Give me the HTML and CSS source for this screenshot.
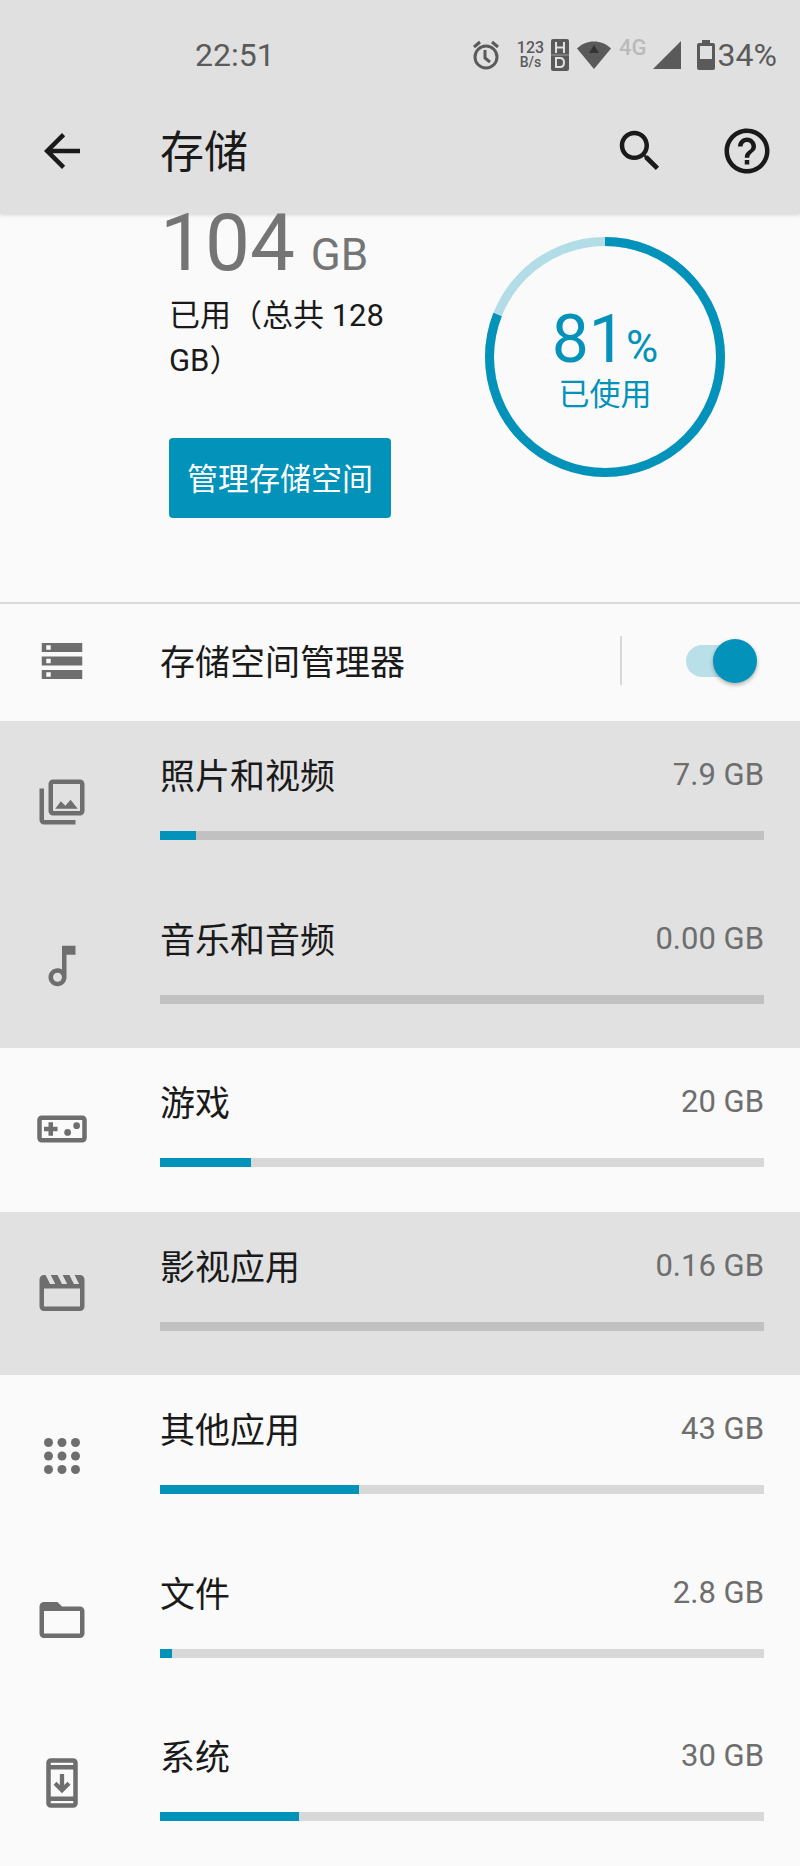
FILE: index.html
```html
<!DOCTYPE html>
<html lang="zh-CN">
<head>
  <meta charset="UTF-8">
  <meta name="viewport" content="width=device-width, initial-scale=1.0">
  <title>存储</title>
  <link rel="stylesheet" href="styles.css">
</head>
<body>
  <header class="header">
    <!-- Status bar -->
    <div class="status-bar">
      <span class="clock">22:51</span>
      <div class="status-icons">
        <svg class="status-alarm" viewBox="0 0 28 30" width="28" height="30">
          <g fill="none" stroke="currentColor" stroke-width="3">
            <circle cx="14" cy="17" r="11"/>
            <path d="M13 10v8l5 4M2 7l6-5M26 7l-6-5"/>
          </g>
        </svg>
        <div class="net-speed">
          <span class="net-value">123</span>
          <span class="net-unit">B/s</span>
        </div>
        <svg class="status-hd" viewBox="0 0 18 32" width="18" height="32">
          <rect width="18" height="32" rx="2" fill="currentColor"/>
          <path d="M5 3v11M13 3v11M5 8.500h8M5 19v9h4q4 0 4-4.500T9 19z" fill="none" stroke="#e0e0e0" stroke-width="2"/>
          <path d="M0 16h18" stroke="#e0e0e0" stroke-width="1" opacity="0.5"/>
        </svg>
        <svg class="status-wifi" viewBox="0 0 34 28" width="34" height="28">
          <path d="M17 28L0 7.500C9-2 25-2 34 7.500z" fill="currentColor"/>
          <path d="M17 4l5 8H12z" fill="#333"/>
        </svg>
        <span class="net-type">4G</span>
        <svg class="status-signal" viewBox="0 0 28 28" width="28" height="28">
          <path d="M28 0v28H0z" fill="currentColor"/>
        </svg>
        <svg class="status-battery" viewBox="0 0 18 30" width="18" height="30">
          <path d="M5 0h8v3h3q2 0 2 2v23q0 2-2 2H2q-2 0-2-2V5q0-2 2-2h3zM3 6v13h12V6z" fill="currentColor" fill-rule="evenodd"/>
        </svg>
        <span class="battery-level">34%</span>
      </div>
    </div>

    <!-- Toolbar -->
    <div class="toolbar">
      <button class="icon-btn" aria-label="返回">
        <svg class="icon" viewBox="0 0 24 24"><path d="M20 11H7.830l5.590-5.590L12 4l-8 8 8 8 1.410-1.410L7.830 13H20v-2z"/></svg>
      </button>
      <h1 class="title">存储</h1>
      <div class="actions">
        <button class="icon-btn" aria-label="搜索">
          <svg class="icon" viewBox="0 0 24 24"><path d="M15.500 14h-.790l-.280-.270C15.410 12.590 16 11.110 16 9.500 16 5.910 13.090 3 9.500 3S3 5.910 3 9.500 5.910 16 9.500 16c1.610 0 3.090-.590 4.230-1.570l.270.280v.790l5 4.990L20.490 19l-4.990-5zm-6 0C7.010 14 5 11.990 5 9.500S7.010 5 9.500 5 14 7.010 14 9.500 11.990 14 9.500 14z"/></svg>
        </button>
        <button class="icon-btn" aria-label="帮助">
          <svg class="icon" viewBox="0 0 24 24"><path d="M11 18h2v-2h-2v2zm1-16C6.480 2 2 6.480 2 12s4.480 10 10 10 10-4.480 10-10S17.520 2 12 2zm0 18c-4.410 0-8-3.590-8-8s3.590-8 8-8 8 3.590 8 8-3.590 8-8 8zm0-14c-2.210 0-4 1.790-4 4h2c0-1.100.9-2 2-2s2 .9 2 2c0 2-3 1.750-3 5h2c0-2.250 3-2.500 3-5 0-2.210-1.790-4-4-4z"/></svg>
        </button>
      </div>
    </div>
  </header>

  <main class="content">
    <!-- Usage summary -->
    <section class="summary">
      <div class="usage">
        <p class="usage-total">104 <span class="usage-unit">GB</span></p>
        <p class="usage-text">已用（总共 128 GB）</p>
        <button class="btn-manage">管理存储空间</button>
      </div>
      <div class="donut">
        <svg class="donut-ring" viewBox="0 0 240 240">
          <circle class="donut-track" cx="120" cy="120" r="115.500"/>
          <circle class="donut-value" cx="120" cy="120" r="115.500" pathLength="100" stroke-dasharray="81 19" transform="rotate(-90 120 120)"/>
        </svg>
        <p class="donut-percent">81<span class="donut-sign">%</span></p>
        <p class="donut-label">已使用</p>
      </div>
    </section>

    <!-- Storage manager switch -->
    <section class="manager">
      <svg class="icon" viewBox="0 0 24 24"><path fill-rule="evenodd" d="M3 20h18v-4H3zm2-3h2v2H5zM3 4v4h18V4zm4 3H5V5h2zm-4 7h18v-4H3zm2-3h2v2H5z"/></svg>
      <label class="manager-label" for="manager-switch">存储空间管理器</label>
      <div class="manager-switch">
        <input type="checkbox" id="manager-switch" class="switch" checked>
      </div>
    </section>

    <!-- Categories -->
    <ul class="categories">
      <li class="category shaded">
        <svg class="icon" viewBox="0 0 24 24"><path fill-rule="evenodd" d="M20 2H8c-1.100 0-2 .9-2 2v12c0 1.100.9 2 2 2h12c1.100 0 2-.9 2-2V4c0-1.100-.9-2-2-2zm0 14H8V4h12zM9 15h10l-3.200-4-2.300 2.700-2-2zM2 6v14c0 1.100.9 2 2 2h14v-2H4V6z"/></svg>
        <label class="name" for="photos">照片和视频</label>
        <span class="size">7.9 GB</span>
        <progress id="photos" class="bar" value="6" max="100"></progress>
      </li>
      <li class="category shaded">
        <svg class="icon" viewBox="0 0 24 24"><path d="M12 3l.010 10.550c-.590-.340-1.270-.550-2-.550C7.790 13 6 14.790 6 17s1.790 4 4.010 4S14 19.210 14 17V7h4V3h-6zm-1.990 16c-1.100 0-2-.9-2-2s.9-2 2-2 2 .9 2 2-.9 2-2 2z"/></svg>
        <label class="name" for="music">音乐和音频</label>
        <span class="size">0.00 GB</span>
        <progress id="music" class="bar" value="0" max="100"></progress>
      </li>
      <li class="category">
        <svg class="icon" viewBox="0 0 24 24"><path fill-rule="evenodd" d="M21 6H3c-1.100 0-2 .9-2 2v8c0 1.100.9 2 2 2h18c1.100 0 2-.9 2-2V8c0-1.100-.9-2-2-2zm0 10H3V8h18z"/><path d="M6 15h2v-2h2v-2H8V9H6v2H4v2h2z"/><circle cx="14.500" cy="13.500" r="1.500"/><circle cx="18.500" cy="10.500" r="1.500"/></svg>
        <label class="name" for="games">游戏</label>
        <span class="size">20 GB</span>
        <progress id="games" class="bar" value="15" max="100"></progress>
      </li>
      <li class="category shaded">
        <svg class="icon" viewBox="0 0 24 24"><path fill-rule="evenodd" d="M4 4h.7l2 4H9L7 4h3l2 4h2.300l-2-4h3l2 4h2.300l-2-4H20c1.100 0 2 .9 2 2v12c0 1.100-.9 2-2 2H4c-1.100 0-2-.9-2-2V6c0-1.100.9-2 2-2zm0 6v8h16v-8z"/></svg>
        <label class="name" for="movies">影视应用</label>
        <span class="size">0.16 GB</span>
        <progress id="movies" class="bar" value="0" max="100"></progress>
      </li>
      <li class="category">
        <svg class="icon" viewBox="0 0 24 24"><circle cx="6" cy="6" r="2"/><circle cx="12" cy="6" r="2"/><circle cx="18" cy="6" r="2"/><circle cx="6" cy="12" r="2"/><circle cx="12" cy="12" r="2"/><circle cx="18" cy="12" r="2"/><circle cx="6" cy="18" r="2"/><circle cx="12" cy="18" r="2"/><circle cx="18" cy="18" r="2"/></svg>
        <label class="name" for="apps">其他应用</label>
        <span class="size">43 GB</span>
        <progress id="apps" class="bar" value="33" max="100"></progress>
      </li>
      <li class="category">
        <svg class="icon" viewBox="0 0 24 24"><path d="M20 6h-8l-2-2H4c-1.100 0-2 .9-2 2v12c0 1.100.9 2 2 2h16c1.100 0 2-.9 2-2V8c0-1.100-.9-2-2-2zm0 12H4V8h16v10z"/></svg>
        <label class="name" for="files">文件</label>
        <span class="size">2.8 GB</span>
        <progress id="files" class="bar" value="2" max="100"></progress>
      </li>
      <li class="category">
        <svg class="icon" viewBox="0 0 24 24"><path fill-rule="evenodd" d="M17 1H7c-1.100 0-2 .9-2 2v18c0 1.100.9 2 2 2h10c1.100 0 2-.9 2-2V3c0-1.100-.9-2-2-2zm0 20H7v-1h10zm0-3H7V6h10zm0-14H7V3h10z"/><path d="M12 8v7.200M8.900 12.100l3.100 3.100 3.100-3.100" fill="none" stroke="currentColor" stroke-width="1.900"/></svg>
        <label class="name" for="system">系统</label>
        <span class="size">30 GB</span>
        <progress id="system" class="bar" value="23" max="100"></progress>
      </li>
    </ul>
  </main>
</body>
</html>
```
FILE: styles.css
```css
* {
  margin: 0;
  padding: 0;
  box-sizing: border-box;
}

body {
  display: flex;
  flex-direction: column;
  min-height: 100vh;
  font-family: Roboto, "Noto Sans CJK SC", sans-serif;
  font-size: 31px;
  background: #fafafa;
  color: #1a1a1a;
}

button {
  border: none;
  background: none;
  font: inherit;
  color: inherit;
  cursor: pointer;
}

.icon {
  display: block;
  width: 54px;
  height: 54px;
  fill: currentColor;
}

/* Header */
.header {
  background: #e0e0e0;
  box-shadow: 0 1px 4px rgba(0, 0, 0, 0.15);
}

.status-bar {
  display: flex;
  align-items: center;
  justify-content: space-between;
  height: 88px;
  padding: 22px 23px 0 195px;
  color: #5a5a5a;
  font-size: 32px;
}

.status-icons {
  display: flex;
  align-items: center;
}

.net-speed {
  display: flex;
  flex-direction: column;
  align-items: center;
  margin: 0 7px 0 17px;
  line-height: 15px;
  font-weight: 500;
}

.net-value {
  font-size: 16px;
}

.net-unit {
  font-size: 14px;
}

.status-wifi {
  margin: 0 8px;
}

.net-type {
  margin-bottom: 14px;
  font-size: 22px;
  font-weight: 500;
  line-height: 22px;
  color: #bababa;
}

.status-signal {
  margin: 0 16px 0 6px;
}

.battery-level {
  margin-left: 3px;
}

.toolbar {
  display: flex;
  align-items: center;
  height: 126px;
  padding: 0 26px 0 35px;
}

.title {
  margin-left: 71px;
  padding-bottom: 4px;
  font-size: 44px;
  font-weight: 400;
}

.actions {
  display: flex;
  gap: 53px;
  margin-left: auto;
}

/* Content */
.content {
  flex: 1;
  display: flex;
  flex-direction: column;
}

.summary {
  display: flex;
  justify-content: space-between;
  align-items: flex-start;
  height: 388px;
  padding: 0 75px 0 160px;
}

.usage {
  width: 240px;
}

.usage-total {
  font-size: 80px;
  line-height: 76px;
  margin-top: -9px;
  white-space: nowrap;
  color: #757575;
}

.usage-unit {
  margin-left: -4px;
  font-size: 44px;
}

.usage-text {
  padding-left: 9px;
  line-height: 45px;
}

.btn-manage {
  margin: 55px 0 0 9px;
  padding-bottom: 4px;
  width: 222px;
  height: 80px;
  border-radius: 4px;
  background: #0392b9;
  color: white;
}

.donut {
  position: relative;
  display: flex;
  flex-direction: column;
  align-items: center;
  width: 240px;
  height: 240px;
  margin-top: 23px;
  padding-top: 78px;
  color: #0392b9;
}

.donut-ring {
  position: absolute;
  inset: 0;
  fill: none;
  stroke-width: 9;
}

.donut-track {
  stroke: #b2dde7;
}

.donut-value {
  stroke: #0392b9;
}

.donut-percent {
  font-size: 66px;
  line-height: 50px;
}

.donut-sign {
  font-size: 44px;
}

.donut-label {
  line-height: 45px;
}

/* Storage manager */
.manager {
  display: flex;
  align-items: center;
  height: 119px;
  padding: 0 43px 4px 35px;
  border-top: 2px solid #dadada;
  color: #6e6e6e;
}

.manager-label {
  margin-left: 71px;
  padding-bottom: 2px;
  font-size: 35px;
  color: #1a1a1a;
}

.manager-switch {
  display: flex;
  align-items: center;
  height: 49px;
  margin-left: auto;
  padding-left: 64px;
  border-left: 2px solid #d8d8d8;
}

.switch {
  appearance: none;
  display: grid;
  align-items: center;
  width: 71px;
  height: 44px;
  cursor: pointer;
}

.switch::before,
.switch::after {
  content: "";
  grid-area: 1 / 1;
}

.switch::before {
  width: 66px;
  height: 32px;
  border-radius: 16px;
  background: #c4c4c4;
}

.switch::after {
  width: 44px;
  height: 44px;
  border-radius: 50%;
  background: #fafafa;
  box-shadow: 0 2px 4px rgba(0, 0, 0, 0.3);
}

.switch:checked::before {
  background: #b9e0e9;
}

.switch:checked::after {
  justify-self: end;
  background: #0392b9;
}

/* Categories */
.categories {
  flex: 1;
  display: flex;
  flex-direction: column;
  list-style: none;
}

.category {
  flex: 1;
  display: grid;
  grid-template-columns: 125px 1fr auto;
  grid-template-rows: 110px 9px;
  padding: 0 36px 0 35px;
  color: #6e6e6e;
}

.category .icon {
  grid-row: 1 / 3;
  margin-top: 54px;
}

.name {
  padding-top: 31px;
  font-size: 35px;
  line-height: 52px;
  color: #1a1a1a;
}

.size {
  padding-top: 28px;
  line-height: 52px;
}

.bar {
  appearance: none;
  grid-column: 2 / 4;
  width: 100%;
  height: 9px;
  border: none;
  background: #d8d8d8;
}

.bar::-webkit-progress-bar {
  background: #d8d8d8;
}

.bar::-webkit-progress-value {
  background: #0392b9;
}

.shaded {
  background: #e1e1e1;
}

.shaded .bar::-webkit-progress-bar {
  background: #c1c1c1;
}
```
